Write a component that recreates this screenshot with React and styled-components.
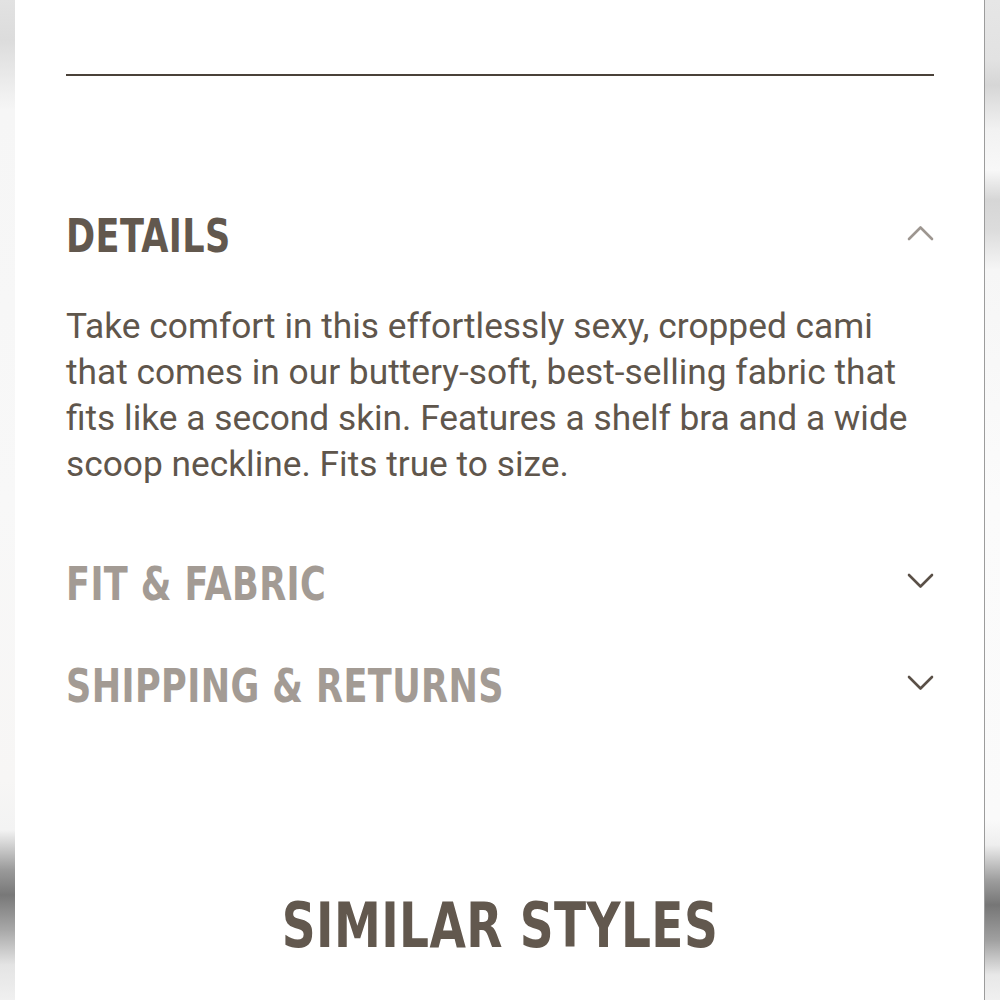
import React from "react";
import styled, { createGlobalStyle } from "styled-components";

const GlobalStyle = createGlobalStyle`
  html, body { margin: 0; padding: 0; background: #fff; }
  body { width: 1000px; height: 1000px; overflow: hidden; }
  * { box-sizing: border-box; }
`;

const Frame = styled.div`
  display: flex;
  width: 1000px;
  height: 1000px;
`;

const EdgeLeft = styled.div`
  width: 15px;
  flex: none;
  background: linear-gradient(
    to bottom,
    #e2e2e2 0px,
    #dcdcdc 40px,
    #f6f6f6 110px,
    #f8f8f8 500px,
    #f7f6f5 780px,
    #f3f3f3 830px,
    #9a9a9a 870px,
    #787878 895px,
    #a8a8a8 930px,
    #e4e4e4 965px,
    #f0f0f0 1000px
  );
`;

const EdgeRight = styled.div`
  width: 16px;
  flex: none;
  border-left: 1px solid #9c9c9c;
  background: linear-gradient(
    to bottom,
    #e6e6e6 0px,
    #e2e2e2 60px,
    #d6d6d6 85px,
    #f2f2f2 130px,
    #f8f8f8 170px,
    #d6d6d6 200px,
    #dcdcdc 230px,
    #f6f6f6 270px,
    #fbfbfb 500px,
    #fafafa 820px,
    #eeeeee 845px,
    #9e9e9e 880px,
    #767676 905px,
    #a0a0a0 940px,
    #e8e8e8 975px,
    #f0f0f0 1000px
  );
`;

const Page = styled.main`
  flex: 1;
  background: #fff;
  padding: 74px 50px 0 51px;
  display: flex;
  flex-direction: column;
  font-family: Roboto, "Liberation Sans", sans-serif;
  color: #5f564c;
`;

const Rule = styled.hr`
  margin: 0;
  border: none;
  border-top: 2px solid #4a4139;
`;

const Section = styled.section`
  display: flex;
  flex-direction: column;
`;

const Header = styled.div`
  display: flex;
  align-items: center;
  justify-content: space-between;
  margin-top: ${(p) => p.$top}px;
`;

/* condensed display face: DejaVu Sans Condensed Bold narrowed further */
const Title = styled.h2`
  margin: 0;
  font-family: "DejaVu Sans Condensed", "DejaVu Sans", sans-serif;
  font-weight: 700;
  font-size: 47px;
  letter-spacing: 0.5px;
  line-height: 1;
  white-space: nowrap;
  transform: scaleX(0.83);
  transform-origin: left center;
  color: ${(p) => (p.$open ? "#62584e" : "#a39b94")};
`;

const Chevron = styled.svg`
  width: 27px;
  height: 16px;
  flex: none;
  margin-bottom: 6px;
`;

const Body = styled.p`
  margin: 44px 0 0;
  font-size: 35.3px;
  line-height: 46px;
  color: #5f564c;
`;

const SimilarWrap = styled.div`
  margin-top: 185px;
  display: flex;
  justify-content: center;
`;

const Similar = styled.h2`
  margin: 0;
  font-family: "DejaVu Sans Condensed", "DejaVu Sans", sans-serif;
  font-weight: 700;
  font-size: 63px;
  letter-spacing: 0.5px;
  line-height: 1;
  white-space: nowrap;
  transform: scaleX(0.83);
  transform-origin: center center;
  color: #62584e;
`;

function Arrow({ up, color }) {
  return (
    <Chevron viewBox="0 0 27 16" fill="none">
      <path
        d={up ? "M2 14 L13.5 2.5 L25 14" : "M2 2 L13.5 13.5 L25 2"}
        stroke={color}
        strokeWidth="2.6"
        strokeLinecap="round"
        strokeLinejoin="round"
      />
    </Chevron>
  );
}

const sections = [
  { title: "DETAILS", open: true, top: 136 },
  { title: "FIT & FABRIC", open: false, top: 73 },
  { title: "SHIPPING & RETURNS", open: false, top: 55 },
];

export default function App() {
  return (
    <>
      <GlobalStyle />
      <Frame>
        <EdgeLeft />
        <Page>
          <Rule />
          {sections.map((s) => (
            <Section key={s.title}>
              <Header $top={s.top}>
                <Title $open={s.open}>{s.title}</Title>
                <Arrow up={s.open} color={s.open ? "#9d9690" : "#5a5047"} />
              </Header>
              {s.open && (
                <Body>
                  Take comfort in this effortlessly sexy, cropped cami that comes
                  in our buttery-soft, best-selling fabric that fits like a second
                  skin. Features a shelf bra and a wide scoop neckline. Fits true
                  to size.
                </Body>
              )}
            </Section>
          ))}
          <SimilarWrap>
            <Similar>SIMILAR STYLES</Similar>
          </SimilarWrap>
        </Page>
        <EdgeRight />
      </Frame>
    </>
  );
}
